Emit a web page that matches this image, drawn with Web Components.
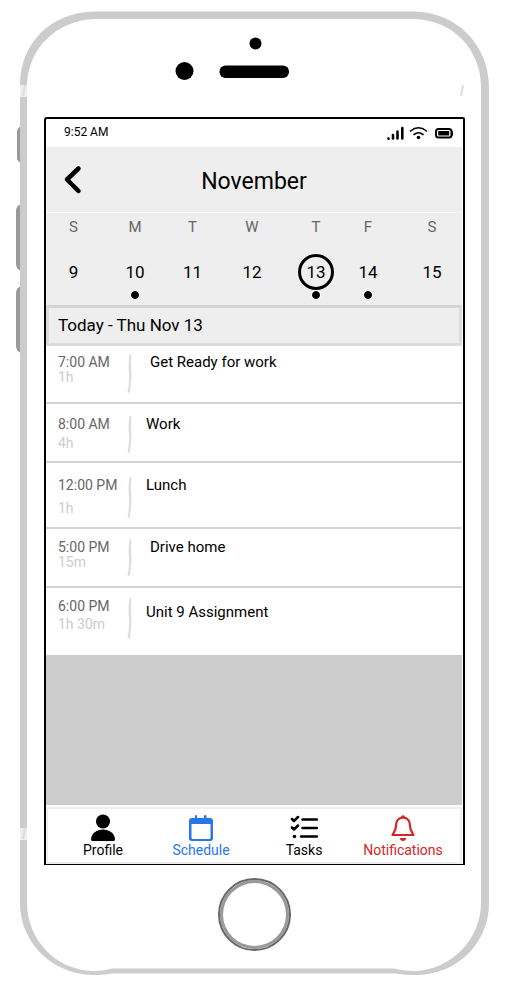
<!DOCTYPE html>
<html lang="en">
<head>
<meta charset="utf-8">
<meta name="viewport" content="width=device-width, initial-scale=1">
<title>Schedule</title>
<style>
  body { margin: 0; background: #fff; color: #000; font-family: Roboto, "Liberation Sans", sans-serif; font-size: 15px; line-height: 18px; }
</style>
</head>
<body>
<phone-frame>
  <status-bar time="9:52 AM"></status-bar>
  <title-bar>November</title-bar>
  <week-strip>
    <week-day letter="S" date="9"></week-day>
    <week-day letter="M" date="10" busy></week-day>
    <week-day letter="T" date="11"></week-day>
    <week-day letter="W" date="12"></week-day>
    <week-day letter="T" date="13" busy selected></week-day>
    <week-day letter="F" date="14" busy></week-day>
    <week-day letter="S" date="15"></week-day>
  </week-strip>
  <day-heading>Today - Thu Nov 13</day-heading>
  <event-list>
    <event-row time="7:00 AM" length="1h" density="compact" inset>Get Ready for work</event-row>
    <event-row time="8:00 AM" length="4h" density="medium">Work</event-row>
    <event-row time="12:00 PM" length="1h" density="loose">Lunch</event-row>
    <event-row time="5:00 PM" length="15m" density="snug" inset>Drive home</event-row>
    <event-row time="6:00 PM" length="1h 30m" density="last">Unit 9 Assignment</event-row>
  </event-list>
  <tab-bar>
    <tab-item icon="profile">Profile</tab-item>
    <tab-item icon="schedule" tone="blue">Schedule</tab-item>
    <tab-item icon="tasks">Tasks</tab-item>
    <tab-item icon="bell" tone="red">Notifications</tab-item>
  </tab-bar>
</phone-frame>

<script>
const shadow = (el, html) => { el.attachShadow({ mode: 'open' }).innerHTML = html; };

customElements.define('phone-frame', class extends HTMLElement {
  constructor() {
    super();
    shadow(this, `<style>
      :host { display: flex; flex-direction: column; position: relative; min-height: 100vh; box-sizing: border-box; }
      .body { position: absolute; inset: 0; width: 100%; height: 100%; }
      .top { position: relative; height: 117px; display: flex; justify-content: center; padding: 0 40px 0 44px; }
      .top svg { width: 160px; height: 117px; }
      main { position: relative; flex: 1; display: flex; flex-direction: column; margin: 0 40px 0 44px; padding-right: 1px; border: 2px solid #000; border-bottom-width: 1px; border-radius: 3px 2px 0 0; background: #fff; }
      .bottom { position: relative; display: flex; justify-content: center; padding: 13px 40px 31px 44px; }
      button { width: 73px; height: 73px; padding: 0; border: 2px solid #666; border-radius: 50%; background: #fff; box-shadow: inset 0 0 0 3px #999; }
    </style>
    <svg class="body" viewBox="0 0 505 982" preserveAspectRatio="none" aria-hidden="true">
      <path fill="#999" d="M21 126Q17 128 17 132V158Q17 161 21 163ZM21 204Q16 206 16 211V264Q16 269 21 271ZM21 286Q16 288 16 293V346Q16 351 21 353Z"/>
      <path fill="#ccc" fill-rule="evenodd" d="M20 85C20 44 50 12 95 11.500H414C458 12 488 46 489 85V905C488 943 458 975 415 975Q407 975 395 973.500H112Q100 975 93 975C52 974 21 943 20 905ZM27 85V903C27 938 54 970 93 971Q104 971 112 968.500H394Q403 971 415 971C451 970 481 939 481 903V85C480 49 453 20 414 19H95C56 20 28 49 27 85Z"/>
      <path fill="#eee" d="M20 85H27V97H20ZM20 828H27V840H20Z"/>
      <path fill="none" stroke="#ddd" stroke-width="2" d="M25 85L23 96M463 85L461 96M25 828L23 839"/>
    </svg>
    <div class="top"><svg viewBox="175 0 160 117" aria-hidden="true">
      <circle cx="255.500" cy="43.500" r="6"/><circle cx="184.500" cy="71" r="9"/><rect x="219.500" y="65.500" width="69.500" height="12.500" rx="6"/>
    </svg></div>
    <main><slot></slot></main>
    <div class="bottom"><button type="button" aria-label="Home"></button></div>`);
  }
});

customElements.define('status-bar', class extends HTMLElement {
  constructor() {
    super();
    shadow(this, `<style>
      :host { display: flex; justify-content: space-between; align-items: center; height: 28px; padding: 0 9px 0 18px; font-size: 12px; line-height: 16px; }
      span { padding-bottom: 2px; }
      svg { width: 68px; height: 18px; }
    </style>
    <span>${this.getAttribute('time')}</span>
    <svg viewBox="0 0 68 18" fill="none" stroke="#000" stroke-linecap="round" role="img" aria-label="Signal, Wi-Fi, battery">
      <path stroke-width="2.600" d="M3.500 14.500V14.700M8 11V14.500M12.500 7.500V14.500M17.300 4V14.500"/>
      <path stroke-width="1.600" d="M25.500 7Q33.500 .5 41.500 7M29 10.500Q33.500 7 38 10.500"/>
      <circle cx="33.500" cy="13.500" r="1.800" fill="#000" stroke="none"/>
      <rect x="51" y="5" width="15.500" height="8.500" rx="2.500" stroke-width="2"/>
      <path stroke-width="1.500" d="M67.200 8V11"/>
      <rect x="53.200" y="7" width="11" height="4.500" fill="#000" stroke="none"/>
    </svg>`);
  }
});

customElements.define('title-bar', class extends HTMLElement {
  constructor() {
    super();
    shadow(this, `<style>
      :host { display: grid; grid-template-columns: 52px 1fr 52px; align-items: center; height: 65px; background: #eee; border-bottom: 1px solid #fafafa; }
      button { width: 52px; height: 44px; padding: 0; border: 0; background: none; }
      svg { display: block; width: 52px; height: 44px; }
      h1 { margin: 0; padding-top: 4px; font-size: 23px; line-height: 28px; font-weight: 400; text-align: center; }
    </style>
    <button type="button" aria-label="Back"><svg viewBox="0 0 52 44" fill="none" stroke="#000" stroke-width="4.500" stroke-linecap="round" stroke-linejoin="round"><path d="M32.500 10.500L21 21.500L32.500 33"/></svg></button>
    <h1><slot></slot></h1>`);
  }
});

customElements.define('week-strip', class extends HTMLElement {
  constructor() {
    super();
    shadow(this, `<style>
      :host { display: grid; grid-template-columns: 35fr 88fr 27fr 92fr 36fr 68fr 60fr; height: 92px; padding-left: 10px; background: #eee; }
    </style><slot></slot>`);
  }
});

customElements.define('week-day', class extends HTMLElement {
  constructor() {
    super();
    const d = this.getAttribute('date');
    shadow(this, `<style>
      :host { display: flex; flex-direction: column; align-items: center; padding-top: 5px; min-width: 0; }
      .letter { color: #666; }
      button { display: flex; align-items: center; justify-content: center; flex: none; box-sizing: border-box; width: 36px; height: 36px; margin: 18px 0 0; padding: 0; border: 3px solid transparent; border-radius: 50%; background: none; color: #000; font: inherit; font-size: 17px; }
      :host([selected]) button { border-color: #000; }
      i { display: none; width: 6px; height: 6px; border-radius: 50%; background: #000; border: 1px solid #000; margin-top: 1px; box-shadow: 0 0 0 1px #fff; }
      :host([busy]) i { display: block; }
    </style>
    <span class="letter">${this.getAttribute('letter')}</span>
    <button type="button" aria-label="November ${d}">${d}</button><i></i>`);
  }
});

customElements.define('day-heading', class extends HTMLElement {
  constructor() {
    super();
    shadow(this, `<style>
      :host { display: block; padding: 7px 9px; background: #eee; border: 3px solid #dcdcdc; border-top-color: #d4d4d4; }
      h2 { margin: 0; font-size: 17px; line-height: 21px; font-weight: 400; }
    </style><h2><slot></slot></h2>`);
  }
});

customElements.define('event-list', class extends HTMLElement {
  constructor() {
    super();
    shadow(this, `<style>
      :host { flex: 1; display: flex; flex-direction: column; background: #ccc; }
    </style><slot></slot>`);
  }
});

customElements.define('event-row', class extends HTMLElement {
  constructor() {
    super();
    shadow(this, `<style>
      :host { display: grid; grid-template-columns: 68px 8px 1fr; padding: 7px 12px 9px; background: #fff; border-bottom: 2px solid #d4d4d4; --step: 15px; --rule: 40px; }
      :host([density="snug"]) { padding: 9px 12px 10px; --rule: 38px; }
      :host([density="medium"]) { padding: 11px 12px 8px; --step: 19px; --rule: 38px; }
      :host([density="loose"]) { padding: 13px 12px 9px; --step: 23px; --rule: 42px; }
      :host([density="last"]) { padding: 9px 12px 16px; border: 0; --step: 18px; --rule: 42px; }
      .time, .length { display: block; font-size: 14px; }
      .time { color: #666; }
      .length { color: #ccc; margin-top: calc(var(--step) - 18px); }
      svg { width: 8px; height: var(--rule); }
      .title { padding-left: 12px; }
      :host([inset]) .title { padding-left: 16px; }
      :host([density="last"]) .title { padding-top: 6px; }
    </style>
    <div><span class="time">${this.getAttribute('time')}</span><span class="length">${this.getAttribute('length')}</span></div>
    <svg viewBox="0 0 8 40" preserveAspectRatio="none" fill="#ddd" aria-hidden="true"><path d="M3.500 1L5.500 1.500C4.500 12 5.500 18 5.500 22C5 30 4.500 36 3.500 40L1.500 39.500C2.500 34 3.500 28 3 20C2 12 3 6 3.500 1Z"/></svg>
    <span class="title"><slot></slot></span>`);
  }
});

customElements.define('tab-bar', class extends HTMLElement {
  constructor() {
    super();
    shadow(this, `<style>
      :host { display: block; border-top: 2px solid #fff; background: #fff; }
      nav { display: grid; grid-template-columns: 98fr 98fr 108fr 90fr; padding: 5px 12px 3px 6px; border: 2px solid #eee; }
    </style><nav><slot></slot></nav>`);
  }
});

const icons = {
  profile: '<circle cx="14" cy="7.500" r="7"/><path d="M2 26C2 12 26 12 26 26Q26 27 24 27H4Q2 27 2 26Z"/>',
  schedule: '<path fill-rule="evenodd" d="M8 1.500Q9 .5 10 1.500V4H17V1.500Q18.500 .5 19.500 1.500V4H23Q26 4 26 7V24.500Q26 27 23 27H5Q2 27 2 24.500V7Q2 4 5 4H8ZM4.500 10V23.500Q4.500 25 6 25H22Q23.500 25 23.500 23.500V10Z"/>',
  tasks: '<g fill="none" stroke="currentColor" stroke-width="2.500" stroke-linecap="round" stroke-linejoin="round"><path d="M12.500 5.500H27M12.500 14H27M11 22.500H27M2 5L4 7L8 3M2 13.500L4 15.500L8 11.500"/></g><circle cx="4.500" cy="22.500" r="1.800"/>',
  bell: '<path fill="none" stroke="currentColor" stroke-width="2.200" stroke-linejoin="round" d="M14 3.500C8 4 7 8 7 12C7 16 5 18.500 3.500 21H24.500C23 18.500 21 16 21 12C21 8 20 4 14 3.500Z"/><path d="M12 4V2.500Q14 0 16 2.500V4ZM10.500 24H17.500Q16.500 27 14 27Q11.500 27 10.500 24Z"/>'
};

customElements.define('tab-item', class extends HTMLElement {
  constructor() {
    super();
    shadow(this, `<style>
      :host { display: flex; justify-content: center; min-width: 0; }
      a { display: flex; flex-direction: column; align-items: center; color: #000; text-decoration: none; font-size: 14px; line-height: 18px; }
      :host([tone="blue"]) a { color: #2876e8; }
      :host([tone="red"]) a { color: #d32626; }
      svg { width: 28px; height: 28px; margin-bottom: -1px; }
    </style>
    <a href="#${this.getAttribute('icon')}"><svg viewBox="0 0 28 28" fill="currentColor" aria-hidden="true">${icons[this.getAttribute('icon')]}</svg><span><slot></slot></span></a>`);
  }
});
</script>
</body>
</html>
